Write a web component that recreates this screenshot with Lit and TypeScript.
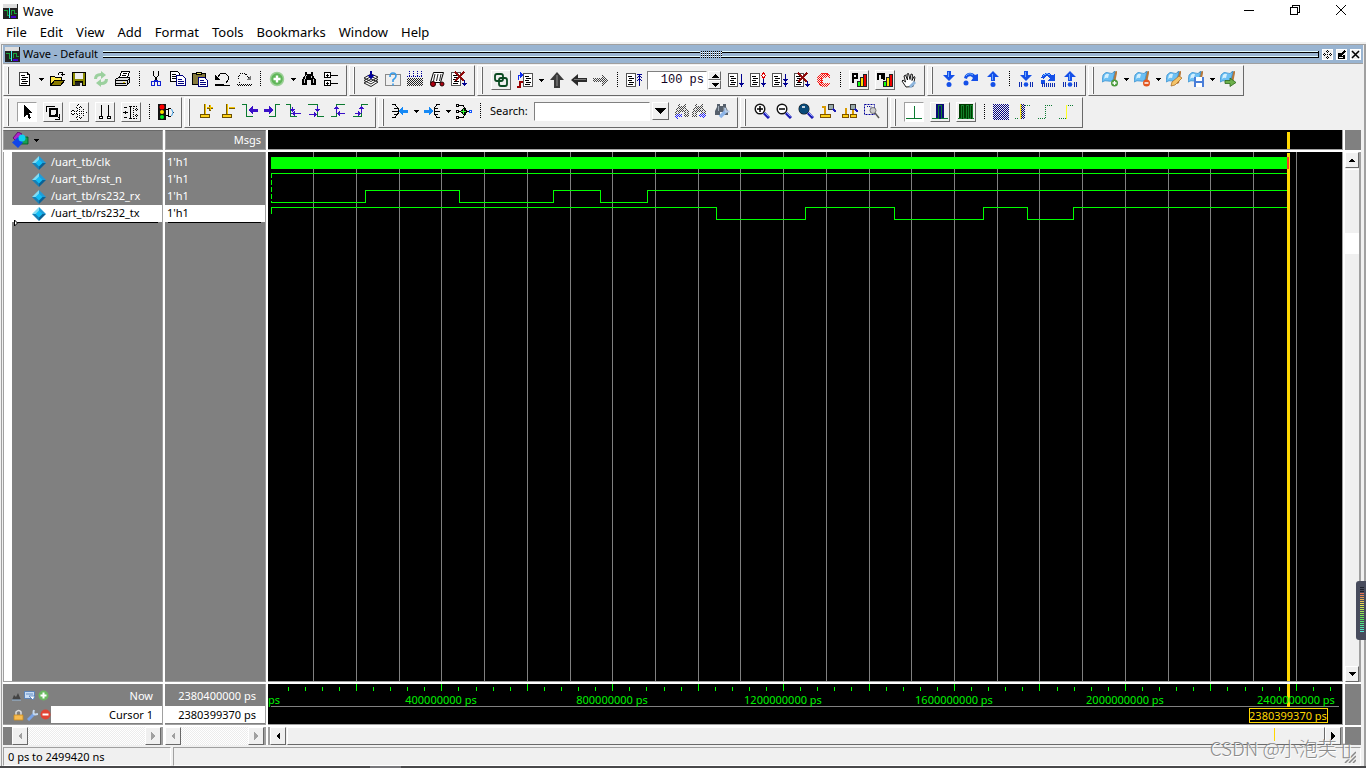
import { LitElement, html, svg, css, nothing } from "lit";
import { customElement } from "lit/decorators.js";
import { classMap } from "lit/directives/class-map.js";

type Item = {
  icon?: string;
  label?: string;
  kind?: "icon" | "raised" | "pressed" | "drop" | "sep" | "time" | "search" | "narrow";
};

const page = svg`<path d="M2.500 1.500h8l2 2v11h-10z" fill="#fff" stroke="#444"/><path d="M10.500 1v2.500H13M3 14.500h10M12.500 4v11" stroke="#000" fill="none"/><path d="M4 4.500h4M5 6.500h6M4 8.500h5M5 10.500h6M4 12.500h6" stroke="#000"/>`;
const sheet = svg`<path d="M.5 1.500h9v13h-9z" fill="#fff" stroke="#555"/><path d="M2 4.500h4M3 6.500h5M2 8.500h4M3 10.500h5M2 12.500h5" stroke="#000"/>`;
const plusDot = svg`<circle cx="12.500" cy="12" r="3.500" fill="#4a9a3c"/><path d="M10.500 12h4M12.500 10v4" stroke="#fff" stroke-width="1.300"/>`;
const flag = svg`<path d="M11 1l4-1v2l-2 10-2 1z" fill="#b9793a"/><path d="M1 4q3-4 6-2t6-2l-2 9q-2 2-5 1t-6 1z" fill="#6cc0f4" stroke="#3a92d0" stroke-width=".8"/><path d="M3 4q2-2 4-1l-1 4q-2-1-4 1z" fill="#d4effd"/>`;
const bar = svg`<path d="M7 10h3v4H7z" fill="#1f1"/><path d="M10 6h3v8h-3z" fill="#ffe000"/><path d="M13 3h3v11h-3z" fill="#e00"/><path d="M6.500 9.500h3v5h-3zM9.500 5.500h3v9h-3zM12.500 2.500h3v12h-3z" fill="none" stroke="#222"/>`;
const lens = svg`<circle cx="6" cy="6" r="4.800" fill="#fff" stroke="#111" stroke-width="1.400"/><path d="M10 10l5 5" stroke="#1a1ab4" stroke-width="3"/><path d="M10.500 9.500l4 4" stroke="#8fa4ff"/>`;
const binoc = svg`<path d="M4 1h2v2h4V1h2v3l3 5v5h-5v-5H6v5H1V9l3-5z" fill="#000"/><path d="M5.500 4L3.500 9v3M10.500 5v2M12.500 8v4" stroke="#ccc"/>`;
const green = "#0a7a30";
const violet = "#3a10c8";
const blue = "#1550e8";
const stepDown = svg`<path d="M6 0h4v4h4L8 10 2 4h4z" fill="${blue}"/><path d="M7 1h1v5H7z" fill="#6fa8ff"/>`;
const over = svg`<path d="M1 7C2 2 8 0 12 4l3-1v7H8l2-3C8 4 4 5 4 8z" fill="${blue}"/><path d="M3 5q3-4 7-1" stroke="#6fb4ff" fill="none"/>`;
const stepUp = svg`<path d="M8 0l6 6h-4v4H6V6H2z" fill="${blue}"/><path d="M7 3h1v6H7z" fill="#6fa8ff"/>`;
const ticks = svg`<path d="M1.500 11v5M3.500 11v5M12.500 11v5M14.500 11v5" stroke="#0d2cb0"/>`;

const icons: Record<string, unknown> = {
  newDoc: page,
  open: svg`<path d="M1.500 5.500h4l1 1h6v7h-11z" fill="#ffe94a" stroke="#000"/><path d="M1.500 14.500l4-5h10l-4 5z" fill="#8a7a00" stroke="#000"/><path d="M9 3.500l1.500-2h3v3M11.500 3.500h4" fill="none" stroke="#000"/>`,
  save: svg`<path d="M1 1h14v14H1z" fill="#000"/><path d="M2 2h2v12H2zM12 2h2v12h-2z" fill="#8a8a00"/><path d="M4 2h8v6H4z" fill="#eee"/><path d="M3 8h10v2H3z" fill="#8a8a00"/><path d="M4 11h7v4H4z" fill="#222"/><path d="M9 12h2v3H9z" fill="#ddd"/>`,
  reload: svg`<g opacity=".8"><path d="M1 8q0-6 7-6V0l5 4-5 4V5Q4 5 4 8z" fill="#86c98a"/><path d="M15 8q0 6-7 6v2l-5-4 5-4v3q4 0 4-3z" fill="#86c98a"/></g>`,
  print: svg`<path d="M6.500.5h8l-2 6h-8z" fill="#fff" stroke="#000"/><path d="M8 2.500h4M7 4.500h4" stroke="#000"/><path d="M.5 8.500l3-2h11v5l-3 3h-11z" fill="#ddd" stroke="#000"/><path d="M1 9.500h11l3-2M12 10v4M1 12.500h10" stroke="#000"/><path d="M8 11h2v1H8z" fill="#e0c000"/>`,
  cut: svg`<path d="M5.500 0v4l4 6M10.500 0v4l-4 6" fill="none" stroke="#000"/><path d="M3.500 10.500h3v4h-3zM9.500 10.500h3v4h-3z" fill="none" stroke="#1020d0"/><path d="M6 9.500h4" stroke="#1020d0" stroke-width="2"/>`,
  copy: svg`<path d="M.5.5h7l2 2v8h-9z" fill="#fff" stroke="#000"/><path d="M2 3.500h4M2 5.500h5M2 7.500h5" stroke="#000"/><path d="M6.500 4.500h6l3 3v7h-9z" fill="#fff" stroke="#00007f"/><path d="M8 8.500h4M8 10.500h6M8 12.500h6" stroke="#00007f"/>`,
  paste: svg`<path d="M.5 2.500h13v11H.5z" fill="#857a3c" stroke="#000"/><path d="M4.500 1.500h5v2h-5z" fill="#e8e060" stroke="#000"/><path d="M6.500 6.500h6l3 3v6h-9z" fill="#fff" stroke="#00007f"/><path d="M8 9.500h4M8 11.500h6M8 13.500h6" stroke="#00007f"/>`,
  undo: svg`<path d="M3 7l4-5h4l3 3v4l-2 3" fill="none" stroke="#000"/><path d="M1 4v5h5z" fill="#000"/><path d="M1 14h9" stroke="#000" stroke-width="2"/><path d="M10 14.500h6" stroke="#000"/>`,
  redo: svg`<path d="M13 7L9 2.500H5L2.500 5v4L4 11.500" fill="none" stroke="#000" stroke-dasharray="1 1"/><path d="M15 4v5h-5z" fill="#777"/><path d="M1 13.500h15M2 14.500h14" stroke="#000" stroke-dasharray="1 1"/>`,
  add: svg`<circle cx="8" cy="8" r="6.500" fill="#5fb658" stroke="#9bd096" stroke-width="1.500"/><path d="M8 4.500v7M4.500 8h7" stroke="#fff" stroke-width="2.400"/>`,
  find: binoc,
  tree: svg`<path d="M1.500 1.500h6v5h-6zM1.500 9.500h6v5h-6z" fill="#fff" stroke="#000"/><path d="M3 4.500h3M4.500 3v3M3 12.500h3M4.500 11v3M8 4.500h7M8 12.500h7" stroke="#000"/>`,
  compile: svg`<path d="M1 12l7-4 7 3-7 4.500zM1 9.500l7-4 7 3-7 4.500zM1 7l7-4 7 3-7 4.500z" fill="#fff" stroke="#222"/><path d="M8 0v5" stroke="#00009a" stroke-width="2"/><path d="M4.500 4h7L8 8.500z" fill="#00009a"/>`,
  help: svg`<path d="M.5 3.500h15v11H.5z" fill="none" stroke="#222" stroke-dasharray="1 1"/><path d="M5 6q0-4 3-4t3 3q0 2-3 4v2M8 12.500v2" stroke="#3a9ce8" stroke-width="1.600" fill="none"/>`,
  memory: svg`<g mask="url(#dither)"><path d="M0 7h16v8H0z" fill="#222"/></g><path d="M2.500 0v5M6.500 0v5M10.500 0v5M14.500 0v5M0 5.500h16" stroke="#00009a" stroke-dasharray="1 1"/>`,
  truck: svg`<path d="M4.500 1.500h10l-3 10h-10z" fill="#fff" stroke="#000"/><path d="M6 3L4.500 10M9 3l-1.500 7M12 3l-1.500 7" stroke="#222"/><circle cx="4" cy="13" r="2.500" fill="#b00010" stroke="#200"/><circle cx="13" cy="13" r="2" fill="#b00010" stroke="#200"/>`,
  stopDoc: svg`${sheet}<path d="M4 1l9 9M13 1L4 10" stroke="#8e0b0b" stroke-width="2"/><path d="M13.500 9v6" stroke="#000090"/><path d="M11 12h5l-2.500 3z" fill="#000090"/>`,
  sync: svg`<path d="M2 4q0-2 2-2h4q2 0 2 2v3q0 2-2 2H4Q2 9 2 7zM6 8q0-2 2-2h4q2 0 2 2v4q0 2-2 2H8q-2 0-2-2z" fill="none" stroke="#0b4a22" stroke-width="1.800"/>`,
  source: svg`<path d="M1.500 8V3H4" fill="none" stroke="#0d2cf0"/><path d="M3 0l4 3-4 3z" fill="#0d2cf0"/><path d="M0 15h3V10h3" fill="none" stroke="#900" stroke-width="2"/><path d="M6.500 1.500h9v13h-9z" fill="#fff" stroke="#555"/><path d="M8 4.500h4M9 6.500h5M8 8.500h4M9 10.500h5M8 12.500h5" stroke="#000"/>`,
  up: svg`<path d="M8 0l7 8h-4v8H5V8H1z" fill="#3b3b3b"/><path d="M7 3h2v11H7z" fill="#666"/>`,
  left: svg`<path d="M0 8l7-6v4h9v4H7v4z" fill="#2b2b2b"/><path d="M3 7h12v1H3z" fill="#777"/>`,
  right: svg`<g mask="url(#dither)"><path d="M16 8L9 2v4H0v4h9v4z" fill="#444"/></g>`,
  restart: svg`<path d="M.5 1.500h9v13h-9z" fill="#fff" stroke="#555"/><path d="M2 4.500h4M3 6.500h5M2 8.500h4M3 10.500h5M2 12.500h5" stroke="#000"/><path d="M13.500 2v12M11 2.500h5M11 8.500h1M15 8.500h1M12 7.500h3M11 5.500h1M15 5.500h1M12 4.500h3" fill="none" stroke="#000090"/>`,
  run: svg`${sheet}<path d="M13.500 2v10" stroke="#000090"/><path d="M11 11h5l-2.500 4z" fill="#000090"/>`,
  cont: svg`${sheet}<path d="M13.500 5v7" stroke="#000090"/><path d="M11 11h5l-2.500 4z" fill="#000090"/><path d="M13.500 1l2 2.500-2 2.500-2-2.500z" fill="#fff" stroke="#d00"/>`,
  runAll: svg`${sheet}<path d="M13.500 2v10" stroke="#000090"/><path d="M11 11h5l-2.500 4zM11 7h5l-2.500 3z" fill="#000090"/>`,
  breakAll: svg`<g mask="url(#dither)"><path d="M5 1h6l3 3v2l-4-1-3 1v5l3 1 4-2v2l-3 3H5l-4-4V5z" fill="#f00"/></g><path d="M13.500 4.500L10.500 1.500h-5L1.500 5.500v5l4 4h5l3-3M10 5.500H7L5.500 7v3L7 11.500h3" stroke="#f13a2e" fill="none" stroke-dasharray="1 1"/>`,
  perfP: svg`<path d="M2 11V2h4v4H3" stroke="#000" stroke-width="2" fill="none"/>${bar}`,
  perfM: svg`<path d="M1 8V2h6v6M4.500 2v5" stroke="#000" stroke-width="2" fill="none"/>${bar}`,
  hand: svg`<path d="M5 15L1 9l1-1 2.500 2L3 4l1.500-1L6.500 8 6 2l1.500-.5L9 7.500 10 2l1.500.5-.5 6L13 4.500l1 .7-2 9.300z" fill="#fff" stroke="#000" stroke-width=".9"/><path d="M9 15l5-5" stroke="#8fb6dd" stroke-width="3"/>`,
  into: svg`${stepDown}<circle cx="8" cy="13.500" r="2.500" fill="${blue}"/>`,
  over: svg`${over}<circle cx="3" cy="12" r="2.500" fill="${blue}"/>`,
  out: svg`${stepUp}<circle cx="8" cy="13.500" r="2.500" fill="${blue}"/>`,
  intoAll: svg`${stepDown}<circle cx="8" cy="13.500" r="2.300" fill="${blue}"/>${ticks}`,
  overAll: svg`${over}<circle cx="3" cy="11" r="2.200" fill="${blue}"/><path d="M2 14h14" stroke="#0d2cb0" stroke-width="4" stroke-dasharray="1 1"/>`,
  outAll: svg`${stepUp}<circle cx="8" cy="13.500" r="2.300" fill="${blue}"/>${ticks}`,
  flagAdd: svg`${flag}${plusDot}`,
  flagDel: svg`${flag}<circle cx="12.500" cy="12" r="3.500" fill="#e2561e"/><path d="M10.500 12h4" stroke="#fff" stroke-width="1.500"/>`,
  flagEdit: svg`${flag}<path d="M5 15l1-4 7-6 3 2-7 7z" fill="#f5c469" stroke="#a9712c" stroke-width=".8"/>`,
  flagSave: svg`${flag}<path d="M6 6h10v10H6z" fill="#4a7ed8"/><path d="M8 6h6v4H8zM8 12h6v4H8z" fill="#fff"/>`,
  flagGo: svg`${flag}<path d="M5 9.500h5V7l6 4.500-6 4v-3H5z" fill="#6db04c" stroke="#2d6a1c" stroke-width=".8"/>`,
  select: svg`<path d="M5 1v12l3-3 2 5 2-1-2-5h4z" fill="#000"/>`,
  zoomSel: svg`<path d="M1.500 8V2.500H10" fill="none" stroke="#000"/><path d="M5 5h7v7H5z" fill="none" stroke="#000" stroke-width="2"/><path d="M10 10.500l4.500 4M14.500 10v5H10" fill="none" stroke="#000" stroke-width="1"/>`,
  pan: svg`<path d="M7.500.5l3 3h-2v4h4v-2l3 3-3 3v-2h-4v4h2l-3 3-3-3h2v-4h-4v2l-3-3 3-3v2h4v-4h-2z" fill="#fff" stroke="#000" stroke-dasharray="1 1"/>`,
  twoBars: svg`<path d="M4.500 1v11M11.500 1v11" stroke="#000"/><path d="M2.500 12.500h3v2h-3zM10.500 12.500h3v2h-3z" fill="#fff" stroke="#000"/>`,
  edit: svg`<path d="M1 3.500h3M1 13.500h3M0 8.500h5M2.500 7v3M5.500 2.500h2v12h-2" fill="none" stroke="#000"/><path d="M10.500 2v13M8 14.500h3M8 2.500h2" stroke="#000" stroke-dasharray="1 1"/><path d="M10.500 2.500h3M10.500 14.500h3M12 5.500h4M12 11.500h4M13.500 4v3M13.500 10v3" stroke="#000" stroke-dasharray="1 1"/>`,
  light: svg`<path d="M0 0h8v16H0z" fill="#111"/><circle cx="4" cy="3" r="2.500" fill="#f00"/><circle cx="4" cy="8" r="2" fill="#fd0"/><circle cx="4" cy="13" r="2" fill="#0e2"/><path d="M8 5.500h2.500M8 11.500h2.500M10.500 4v9M11 4.500h2M11 12.500h2M15 8.500h1" fill="none" stroke="#000"/><path d="M13.500 5l1.500 3.500-1.500 3.500" stroke="#3b9ae0" fill="none"/>`,
  addCursor: svg`<path d="M7 1v10M9 5h6M12 2v6" stroke="#7a5d00" stroke-width="2"/><path d="M7.500 1v10M9 4.500h6M12.500 2v5" stroke="#f2c200"/><path d="M2.500 11.500h9v3h-9z" fill="#ffd21a" stroke="#6b5000"/>`,
  delCursor: svg`<path d="M7 1v10M9 5h6" stroke="#7a5d00" stroke-width="2"/><path d="M7.500 1v10M9 4.500h6" stroke="#f2c200"/><path d="M2.500 11.500h9v3h-9z" fill="#ffd21a" stroke="#6b5000"/>`,
  prevEdge: svg`<path d="M0 1.500h4.500v12H11" fill="none" stroke="${green}"/><path d="M6 7l5-4v2.500h5v3h-5V11z" fill="${violet}"/>`,
  nextEdge: svg`<path d="M16 1.500h-4.500v12H5" fill="none" stroke="${green}"/><path d="M10 7L5 3v2.500H0v3h5V11z" fill="${violet}"/>`,
  prevFall: svg`<path d="M0 1.500h4.500v12H11" fill="none" stroke="${green}"/><path d="M5 10.500h10M6.500 4v4M8.500 8v5M4 6.500h5" fill="none" stroke="${violet}"/><path d="M4 6h5L6.500 9zM6 10.500L9 8v5z" fill="${violet}"/>`,
  nextFall: svg`<path d="M0 1.500h9.500v12H16" fill="none" stroke="${green}"/><path d="M1 11.500h6M9.500 3v4" fill="none" stroke="${violet}"/><path d="M7 6h5L9.500 9zM9 11.500L6 9v5z" fill="${violet}"/>`,
  prevRise: svg`<path d="M1 13.500h5.500v-12H15" fill="none" stroke="${green}"/><path d="M9 10.500h6M6.500 6v4" fill="none" stroke="${violet}"/><path d="M4 6h5L6.500 3zM7 10.500L10 8v5z" fill="${violet}"/>`,
  nextRise: svg`<path d="M1 13.500h8.500v-12H16" fill="none" stroke="${green}"/><path d="M3 10.500h5M9.500 6v4" fill="none" stroke="${violet}"/><path d="M7 6h5L9.500 3zM9 10.500L6 8v5z" fill="${violet}"/>`,
  merge: svg`<path d="M0 1.500h3l3 4v5l-3 4H0M0 8.500h6M2 5.500h3M2 11.500h3" fill="none" stroke="#000"/><path d="M6 8l5-4v2.500h5v3h-5V12z" fill="#1689f5"/>`,
  split: svg`<path d="M16 1.500h-3l-3 4v5l3 4h3M10 8.500h6M11 5.500h3M11 11.500h3" fill="none" stroke="#000"/><path d="M10 8L5 4v2.500H0v3h5V12z" fill="#1689f5"/>`,
  expand: svg`<path d="M2 2.500h5l3 4M2 8.500h3M2 14.500h5l3-4" fill="none" stroke="#000"/><path d="M.5 1.500h2v2h-2zM.5 7.500h2v2h-2zM.5 13.500h2v2h-2z" fill="#fff" stroke="#000"/><path d="M8 4l4 4.500L8 13 4 8.500z" fill="#000"/><path d="M7.500 6v5M5 8.500h5" stroke="#3f3"/><path d="M11 8.500h2" stroke="#000"/><path d="M13.500 7.500h2v2h-2z" fill="#fff" stroke="#15f"/>`,
  findPrev: svg`<g mask="url(#dither)"><g opacity=".7">${binoc}</g><path d="M0 13l4-4v2h4v3H4v2z" fill="#22f"/></g>`,
  findNext: svg`<g mask="url(#dither)"><g opacity=".7">${binoc}</g><path d="M16 13l-4-4v2H8v3h4v2z" fill="#22f"/></g>`,
  findOpt: svg`<path d="M3 1h3v2h3V1h3v3l2 4v4h-4V9H6v3H1V8l2-4z" fill="#56606c"/><path d="M4.500 3v5M10 4v4" stroke="#a0acb8"/><path d="M6 14l6-6" stroke="#8cb4e8" stroke-width="3.500"/><path d="M11 5l1 3.500h3.500" stroke="#b8cce6" stroke-width="2" fill="none"/>`,
  zoomIn: svg`${lens}<path d="M3 6h6M6 3v6" stroke="#000" stroke-width="1.500"/>`,
  zoomOut: svg`${lens}<path d="M3 6h6" stroke="#000" stroke-width="1.500"/>`,
  zoomFull: svg`${lens}<circle cx="6" cy="6" r="5" fill="#0a4a78"/><path d="M4 4h3" stroke="#fff" stroke-width="1.500"/>`,
  zoomCursor: svg`<path d="M4.500 3v9M2 3.500h4" stroke="#d89a00" stroke-width="2"/><path d="M.5 11.500h10v3H.5z" fill="#ffd21a" stroke="#7a5200"/><circle cx="11" cy="4" r="3" fill="#9aa" stroke="#333"/><path d="M13 6l3 3" stroke="#1a1ab4" stroke-width="2"/>`,
  zoomTwo: svg`<path d="M3.500 5v7M10.500 6v6" stroke="#d89a00" stroke-width="2"/><path d="M.5 11.500h6v3h-6zM8.500 11.500h6v3h-6z" fill="#ffd21a" stroke="#7a5200"/><circle cx="11" cy="4" r="3" fill="#9aa" stroke="#333"/><path d="M13 6l3 3" stroke="#1a1ab4" stroke-width="2"/>`,
  zoomRange: svg`<path d="M.5 1.500h10v10H.5z" fill="none" stroke="#00009a" stroke-dasharray="2 1"/><path d="M3 3.500h4v5" fill="none" stroke="#00009a" stroke-dasharray="1 1"/><circle cx="9" cy="7.500" r="3" fill="#ccc" stroke="#777"/><path d="M11 10l4 5" stroke="#555" stroke-width="1.500"/>`,
  waveA: svg`<path d="M0 14.500h16M8.500 2v12" stroke="${green}"/>`,
  waveB: svg`<path d="M4 0h8v15H4z" fill="#0b0b78"/><path d="M0 14.500h6v-13h3v13h7" fill="none" stroke="${green}"/>`,
  waveC: svg`<path d="M1 0h14v15H1z" fill="#003c00"/><path d="M0 14.500h3v-13h2v13h3v-13h2v13h2v-13h2v13h2" fill="none" stroke="#12802a"/>`,
  hatch: svg`<g mask="url(#dither)"><path d="M0 0h16v16H0z" fill="#00007f"/></g>`,
  edgeA: svg`<path d="M5 0h2v15H5z" fill="#fe3"/><g mask="url(#dither)"><path d="M6 0h4v15H6z" fill="#000070"/></g><path d="M0 14.500h4M10 1.500h5" stroke="${green}" stroke-dasharray="1 1"/>`,
  edgeB: svg`<path d="M1 14.500h7.500v-13H15" fill="none" stroke="${green}" stroke-dasharray="1 1"/>`,
  edgeC: svg`<path d="M0 14.500h7v-13h8" fill="none" stroke="${green}" stroke-dasharray="1 1"/><path d="M7.500 1v14" stroke="#ff2"/>`,
};

/* Icons made of curves and shading; the others keep hard pixel edges. */
const smooth = new Set(["reload", "add", "help", "truck", "compile", "sync", "up", "left", "hand", "into", "over", "out", "intoAll", "outAll", "flagAdd", "flagDel", "flagEdit", "flagSave", "flagGo", "findOpt", "zoomIn", "zoomOut", "zoomFull", "zoomRange", "light"]);

const i = (icon: string, label: string): Item => ({ icon, label, kind: "icon" });
const r = (icon: string, label: string): Item => ({ icon, label, kind: "raised" });
const sep: Item = { kind: "sep" };
const drop: Item = { kind: "drop" };

const rowOne: { low?: boolean; items: Item[] }[] = [
  { items: [i("newDoc", "New"), drop, i("open", "Open"), i("save", "Save"), i("reload", "Reload"), i("print", "Print"), sep, i("cut", "Cut"), i("copy", "Copy"), i("paste", "Paste"), i("undo", "Undo"), i("redo", "Redo"), sep, i("add", "Add"), drop, i("find", "Find"), i("tree", "Collapse all")] },
  { items: [i("compile", "Compile"), i("help", "Help"), i("memory", "Memory"), i("truck", "Simulate"), i("stopDoc", "End simulation")] },
  { low: true, items: [r("sync", "Link"), i("source", "Source"), drop, i("up", "Up"), i("left", "Back"), i("right", "Forward"), sep, i("restart", "Restart"), { kind: "time" }, i("run", "Run"), i("cont", "Continue"), i("runAll", "Run all"), i("stopDoc", "Break"), i("breakAll", "Stop"), sep, r("perfP", "Performance profile"), r("perfM", "Memory profile"), i("hand", "Edit breakpoints")] },
  { items: [i("into", "Step into"), i("over", "Step over"), i("out", "Step out"), sep, i("intoAll", "Step into current"), i("overAll", "Step over current"), i("outAll", "Step out current")] },
  { items: [i("flagAdd", "Add bookmark"), drop, i("flagDel", "Delete bookmark"), drop, i("flagEdit", "Manage bookmarks"), i("flagSave", "Save bookmarks"), drop, i("flagGo", "Go to bookmark")] },
];

const rowTwo: { low?: boolean; items: Item[] }[] = [
  { low: true, items: [{ icon: "select", label: "Select mode", kind: "pressed" }, r("zoomSel", "Zoom mode"), r("pan", "Pan mode"), r("twoBars", "Two cursor mode"), r("edit", "Edit mode"), sep, i("light", "Stop drawing")] },
  { items: [i("addCursor", "Insert cursor"), i("delCursor", "Delete cursor"), i("prevEdge", "Previous transition"), i("nextEdge", "Next transition"), i("prevFall", "Previous falling edge"), i("nextFall", "Next falling edge"), i("prevRise", "Previous rising edge"), i("nextRise", "Next rising edge")] },
  { items: [i("merge", "Drivers"), drop, i("split", "Readers"), drop, i("expand", "Expand"), sep, { kind: "search" }, { icon: "findPrev", label: "Search backward", kind: "narrow" }, { icon: "findNext", label: "Search forward", kind: "narrow" }, i("findOpt", "Search options")] },
  { items: [i("zoomIn", "Zoom in"), i("zoomOut", "Zoom out"), i("zoomFull", "Zoom full"), i("zoomCursor", "Zoom on cursor"), i("zoomTwo", "Zoom between cursors"), i("zoomRange", "Zoom other window")] },
  { low: true, items: [{ icon: "waveA", label: "Show drivers", kind: "pressed" }, r("waveB", "Pulse"), r("waveC", "Clock"), sep, i("hatch", "Unknown"), i("edgeA", "Edge delay"), i("edgeB", "Edge"), i("edgeC", "Edge mark")] },
];

const menus = ["File", "Edit", "View", "Add", "Format", "Tools", "Bookmarks", "Window", "Help"];
const signals = ["/uart_tb/clk", "/uart_tb/rst_n", "/uart_tb/rs232_rx", "/uart_tb/rs232_tx"];

const END = 2380400000;
const ORIGIN = 3;
const timeX = (ps: number) => Math.floor(ORIGIN + (ps * 170.88) / 4e8);
/* Transition times in pixels from the start of the trace. */
const rxEdges = [94, 188, 282, 329, 376];
const txEdges = [445, 534, 623, 712, 756, 802];

const trace = (edges: number[], high: number, low: number, startHigh: boolean) => {
  let level = startHigh;
  let d = `M${ORIGIN}.5 ${level ? high : low}.5`;
  for (const e of edges) {
    level = !level;
    d += `H${ORIGIN + e}.5V${level ? high : low}.5`;
  }
  return d + `H${timeX(END)}`;
};

@customElement("app-root")
export class AppRoot extends LitElement {
  static styles = css`
    :host { display: block; height: 100vh; font: 11px/14px "Noto Sans", sans-serif; color: #000; }
    * { box-sizing: border-box; }
    button { padding: 0; border: 0; background: none; font: inherit; color: inherit; display: flex; align-items: center; justify-content: center; }
    svg { display: block; flex: none; }
    .crisp { shape-rendering: crispEdges; }
    .defs { position: absolute; width: 0; height: 0; }
    .app { height: 100%; display: flex; flex-direction: column; background: #fff; overflow: hidden; }
    .title { height: 23px; flex: none; display: flex; align-items: center; padding: 0 2px 0 3px; font-size: 12px; }
    .title span { flex: 1; margin-left: 5px; }
    .title button { width: 46px; height: 20px; align-self: flex-start; }
    .menu { height: 19px; flex: none; display: flex; align-items: flex-start; gap: 13px; padding-left: 6px; font-size: 13px; }
    .menu button { height: 18px; }
    .pane { flex: 1; min-height: 0; display: flex; flex-direction: column; background: #f0f0f0; padding: 1px 3px 0 3px; box-shadow: inset 1px 2px #f0f0f0, inset 2px 3px #a0a0a0, inset -2px 0 #a0a0a0; }
    .caption { height: 18px; margin-top: 2px; flex: none; display: flex; align-items: center; background: #99b4d1; padding: 0 2px 0 2px; }
    .caption span { margin: 0 5px 0 3px; }
    .rails { flex: 1; height: 7px; display: flex; align-items: stretch; justify-content: center; border-right: 1px solid #000; background: linear-gradient(#e0fbff 1px, #000 1px 2px, #99b4d1 2px 5px, #e0fbff 5px 6px, #000 6px); }
    .grab { width: 22px; background: conic-gradient(#000 25%, #fff 0 50%, #99b4d1 0) 0 0 / 2px 2px; }
    .mini { width: 11px; height: 11px; margin-left: 3px; background: #f0f0f0; border: 1px solid #fff; }
    .bars { flex: none; padding: 1px 0; border-top: 1px solid #a0a0a0; }
    .barrow { display: flex; gap: 2px; margin-bottom: 1px; }
    .bar { height: 31px; display: flex; align-items: center; padding: 0 4px 3px 3px; border: 1px solid; border-color: #fff #696969 #696969 #fff; }
    .bar.low { padding-bottom: 1px; }
    .handle { width: 2px; align-self: stretch; margin: 1px 5px 0 0; background: linear-gradient(90deg, #fff 1px, #696969 1px); }
    .bar:not(.low) .handle { margin-bottom: -2px; }
    .tool { width: 22px; height: 20px; }
    .narrow { width: 17px; height: 20px; }
    .narrow + .tool { margin-left: 3px; }
    .raised, .pressed { width: 20px; height: 20px; margin: 0 3px; border: 1px solid; border-color: #fff #696969 #696969 #fff; }
    .pressed { background: #fff; border-color: #a0a0a0 #fff #fff #a0a0a0; }
    .drop { width: 10px; height: 16px; }
    .sep { width: 11px; height: 16px; background: repeating-linear-gradient(#000 0 1px, transparent 1px 2px) center / 1px 100% no-repeat; }
    .time { width: 60px; height: 19px; margin-left: 2px; padding: 0 2px; border: 1px solid; border-color: #808080 #fff #fff #808080; text-align: right; font: 12px "Liberation Mono", monospace; color: #102; }
    .spin { display: flex; flex-direction: column; margin: 0 4px 0 1px; }
    .spin button { width: 13px; height: 9px; border: 1px solid; border-color: #fff #696969 #696969 #fff; }
    .search { display: contents; }
    .search label { margin: 0 6px 0 4px; }
    .search input { width: 116px; height: 19px; border: 1px solid; border-color: #808080 #fff #fff #808080; background: #fff; }
    .search button { width: 17px; height: 18px; margin: 0 5px 0 2px; border: 1px solid; border-color: #fff #696969 #696969 #fff; }
    .grid { flex: 1; min-height: 0; display: grid; grid-template-columns: 160px 101px minmax(0, 1fr) 16px; grid-template-rows: 20px minmax(0, 1fr) 41px 18px; gap: 2px; background: #fff; margin-right: 2px; }
    .cell { background: #808080; border-right: 1px solid #a0a0a0; border-bottom: 1px solid #a0a0a0; min-width: 0; overflow: hidden; }
    .head { border-top: 1px solid #696969; border-left: 1px solid #a0a0a0; color: #fff; display: flex; align-items: center; gap: 3px; padding: 0 4px 0 8px; }
    .msgs { justify-content: flex-end; }
    .plot { background: #000; }
    .names { border-left: 1px solid #a0a0a0; }
    .gutter { border-left: 8px solid #fff; height: 100%; padding-top: 2px; position: relative; }
    .values { padding-top: 2px; }
    ul { list-style: none; margin: 0; padding: 0; }
    li { height: 17px; line-height: 15px; display: flex; align-items: flex-start; color: #fff; white-space: nowrap; }
    .names li { padding-left: 20px; gap: 5px; }
    li svg { margin-top: 2px; }
    .values li { padding-left: 2px; }
    li.sel { background: #fff; color: #000; }
    .line { height: 1px; margin: 0 4px 0 3px; background: #000; }
    .insert { position: absolute; left: 1px; top: 67px; }
    .foot { padding-top: 1px; display: grid; grid-template-rows: 21px 17px; align-items: center; }
    .foot div { height: 100%; display: flex; align-items: center; justify-content: flex-end; padding-right: 9px; color: #fff; white-space: nowrap; }
    .foot .cur { background: #fff; color: #000; }
    .foot .icons { justify-content: flex-start; padding: 0 0 0 9px; gap: 2px; }
    .foot .icons.cur { background: linear-gradient(90deg, #808080 48px, #fff 48px); }
    .icons span { flex: 1; text-align: right; padding-right: 9px; }
    .hbar { display: flex; background: #f0f0f0; }
    .hbar.first { border-left: 9px solid #808080; }
    .hbar button, .vbar button { width: 16px; height: 100%; flex: none; background: #f0f0f0; border: 1px solid; border-color: #fff #696969 #696969 #fff; }
    .hbar:not(.wide) { border-right: 2px solid #a0a0a0; }
    .track { flex: 1; background: conic-gradient(#fff 25%, #ececec 0 50%, #fff 0 75%, #ececec 0) 0 0 / 2px 2px; }
    .wide { border-left: 2px solid #a0a0a0; border-right: 2px solid #a0a0a0; }
    .thumb { flex: 1; display: flex; min-width: 0; background: #f0f0f0; border: 1px solid; border-color: #fff #696969 #696969 #fff; margin-left: 1px; }
    .vbar { display: flex; flex-direction: column; background: #f0f0f0; border-right: 2px solid #a0a0a0; }
    .vbar button { width: 100%; height: 16px; }
    .vthumb { height: 64px; border-top: 1px solid #fff; margin-top: 1px; }
    .vgap { height: 21px; background: #fff; }
    .vrest { flex: 1; }
    .side { background: #808080; }
    .status { height: 19px; flex: none; display: flex; gap: 2px; margin: 2px 2px 0 0; }
    .status div { border: 1px solid; border-color: #a0a0a0 #fff #fff #a0a0a0; padding: 2px 4px; }
    .range { width: 168px; }
    .rest { flex: 1; display: flex; justify-content: flex-end; align-items: flex-end; }
    .edge { height: 2px; flex: none; background: linear-gradient(90deg, #48484a 370px, #77777a 370px 401px, #48484a 401px); }
    .axis { fill: #00f000; text-anchor: middle; }
    .gold { fill: #ffd700; text-anchor: middle; }
    .meter { position: absolute; right: 0; top: 581px; width: 10px; height: 59px; border-radius: 3px 0 0 3px; background: #474b5c; padding: 6px 2px 6px 4px; }
    .mark-text { position: absolute; right: 15px; bottom: 8px; font: 300 19px/24px "Noto Sans CJK SC", sans-serif; color: #8a8a8a; text-shadow: 1px 1px #fff; pointer-events: none; white-space: nowrap; }
  `;

  private glyph(name: string) {
    return html`<svg class=${smooth.has(name) ? "" : "crisp"} width="16" height="16" viewBox="0 0 16 16" fill="none">${icons[name]}</svg>`;
  }

  private arrow(d: string, color = "#000") {
    return html`<svg class="crisp" width="8" height="8" viewBox="0 0 8 8"><path d=${d} fill=${color} /></svg>`;
  }

  private waveIcon() {
    return html`<svg class="crisp" width="15" height="15" viewBox="0 0 15 15"><path d="M0 0h15v15H0z" fill="#222" /><path d="M0 0h14v4H0z" fill="#ddd" /><path d="M1 6.500h3v5h2M8 10.500v-4h3v3h3" fill="none" stroke="#19a33c" /><path d="M6.500 4v10" stroke="#4ee" /><path d="M8 12.500h5" stroke="#40c" stroke-width="2" /></svg>`;
  }

  private item(it: Item) {
    switch (it.kind) {
      case "sep":
        return html`<span class="sep"></span>`;
      case "drop":
        return html`<button class="drop" aria-label="More">${this.arrow("M1 3h6L4 6z")}</button>`;
      case "time":
        return html`<input class="time" aria-label="Run length" value="100 ps" />
          <span class="spin"><button aria-label="Increase">${this.arrow("M0 6h8L4 2z")}</button><button aria-label="Decrease">${this.arrow("M0 2h8L4 6z")}</button></span>`;
      case "search":
        return html`<span class="search"><label for="search">Search:</label><input id="search" /><button aria-label="Search history">
          <svg class="crisp" width="12" height="8" viewBox="0 0 12 8"><path d="M0 1h12L6 7z" /></svg></button></span>`;
      default: {
        const cls = { tool: it.kind === "icon", narrow: it.kind === "narrow", raised: it.kind === "raised", pressed: it.kind === "pressed" };
        return html`<button class=${classMap(cls)} title=${it.label ?? nothing} aria-label=${it.label ?? nothing}>${this.glyph(it.icon!)}</button>`;
      }
    }
  }

  private bars(rows: { low?: boolean; items: Item[] }[]) {
    return html`<div class="barrow">${rows.map((b) => html`<div class=${classMap({ bar: true, low: !!b.low })}><span class="handle"></span>${b.items.map((it) => this.item(it))}</div>`)}</div>`;
  }

  private gem() {
    return html`<svg width="14" height="14" viewBox="0 0 14 14"><path d="M7 0v7H0z" fill="#7fdcf5" /><path d="M7 0l7 7H7z" fill="#1f9cd8" /><path d="M0 7h7v7z" fill="#1580b8" /><path d="M14 7l-7 7V7z" fill="#0b6296" /><path d="M7 3.500L10.500 7 7 10.500 3.500 7z" fill="#12bdf5" /></svg>`;
  }

  private plot() {
    const grid = Array.from({ length: 24 }, (_, k) => timeX((k + 1) * 1e8) + 0.5);
    const end = timeX(END);
    return html`<svg class="crisp" width="100%" height="100%" role="img" aria-label="Waveforms">
      ${grid.map((x) => svg`<path d="M${x} 0V2000" stroke="#808080" />`)}
      <path d="M${ORIGIN} 5H${end}V17H${ORIGIN}z" fill="#0f0" />
      <g fill="none" stroke="#0f0">
        <path d="M3.500 21V51" stroke-dasharray="5 2" />
        <path d="M3.500 55v7" />
        <path d="M3 21.500H${end}" />
        <path d=${trace(rxEdges, 38, 50, false)} />
        <path d=${trace(txEdges, 55, 67, true)} />
      </g>
      <path d="M${end} 1h3V2000h-3z" fill="#ffd700" />
      <path d="M${end} 5h2v12h-2z" fill="#ff3b1f" />
    </svg>`;
  }

  private timeline() {
    const marks = Array.from({ length: 62 }, (_, k) => k + 1);
    const labels = [4e8, 8e8, 12e8, 16e8, 20e8, 24e8];
    const end = timeX(END);
    return html`<svg class="crisp" width="100%" height="40" role="img" aria-label="Timeline">
      ${marks.map((k) => svg`<path d="M${timeX(k * 4e7) + 0.5} ${k % 5 ? 3 : 0}V7" stroke="#0f0" />`)}
      <path d="M3 22.500H1071" stroke="#808080" />
      <text class="axis" x="6" y="20">ps</text>
      <path d="M${end} 0h3V23h-3z" fill="#ffd700" />
      ${labels.map((t) => svg`<text class="axis" x=${timeX(t)} y="20">${t} ps</text>`)}
      <path d="M${end - 37.5} 24.500h78v14h-78z" fill="#000" stroke="#ffd700" />
      <text class="gold" x=${end + 1} y="36">2380399370 ps</text>
    </svg>`;
  }

  private meterColor(k: number) {
    if (k < 3) return "#1d202b";
    const hue = 12 + ((k - 3) / 19) * 160;
    return `hsl(${Math.round(hue)} 75% 62%)`;
  }

  render() {
    const grey = "#a0a0a0";
    const leftArrow = "M6 0v8L2 4z";
    const rightArrow = "M2 0v8l4-4z";
    return html`
      <svg class="defs"><defs>
        <pattern id="dots" width="2" height="2" patternUnits="userSpaceOnUse"><path d="M0 0h1v1H0zM1 1h1v1H1z" fill="#fff" /></pattern>
        <mask id="dither" maskUnits="userSpaceOnUse" x="0" y="0" width="16" height="16"><rect width="16" height="16" fill="url(#dots)" shape-rendering="crispEdges" /></mask>
      </defs></svg>
      <div class="app">
        <header class="title">${this.waveIcon()}<span>Wave</span>
          <button aria-label="Minimize"><svg class="crisp" width="10" height="10"><path d="M0 5.500h10" stroke="#000" /></svg></button>
          <button aria-label="Restore"><svg class="crisp" width="10" height="10" fill="none" stroke="#000"><path d="M.5 2.500h7v7h-7zM2.500 2V.5h7v7H8" /></svg></button>
          <button aria-label="Close"><svg width="10" height="10"><path d="M0 0l10 10M10 0L0 10" stroke="#000" /></svg></button>
        </header>
        <nav class="menu">${menus.map((m) => html`<button>${m}</button>`)}</nav>
        <main class="pane">
          <div class="caption">${this.waveIcon()}<span>Wave - Default</span><div class="rails"><div class="grab"></div></div>
            <button class="mini" aria-label="Move"><svg class="crisp" width="9" height="9" fill="none" stroke="#000"><path d="M4.500 0v9M0 4.500h9M3 1.500h3M3 7.500h3M1.500 3v3M7.500 3v3" stroke-dasharray="1 1" /></svg></button>
            <button class="mini" aria-label="Dock"><svg class="crisp" width="9" height="9" fill="none" stroke="#000"><path d="M1.500 3v5.500H7V5M8 1L3.500 5.500M3 3v3.500h4" stroke-width="1.500" /></svg></button>
            <button class="mini" aria-label="Close pane"><svg width="9" height="9"><path d="M1 1l7 7M8 1L1 8" stroke="#000" stroke-width="1.600" /></svg></button>
          </div>
          <div class="bars">${this.bars(rowOne)}${this.bars(rowTwo)}</div>
          <div class="grid">
            <div class="cell head"><svg width="17" height="16" viewBox="0 0 17 16"><path d="M6 0l4 2-6 7-3-3z" fill="#b026c8" stroke="#506" stroke-width=".8" /><path d="M9 5h7v7H9z" fill="#1aa050" stroke="#052" stroke-width=".8" /><path d="M6 5l5 5.500L6 16 0 10.500z" fill="#0f46e8" /><circle cx="10" cy="6" r="3.500" fill="#10d0f0" /></svg>${this.arrow("M1 3h6L4 6z")}</div>
            <div class="cell head msgs">Msgs</div>
            <div class="cell plot"><svg class="crisp" width="100%" height="20"><path d="M${timeX(END)} 2h3v17h-3z" fill="#ffd700" /></svg></div>
            <div class="side"></div>

            <div class="cell names"><div class="gutter">
              <ul>${signals.map((s, n) => html`<li class=${classMap({ sel: n === 3 })}>${this.gem()}<span>${s}</span></li>`)}</ul>
              <div class="line"></div>
              <svg class="insert" width="5" height="8"><path d="M1.500 1l3 3-3 3z" fill="#fff" stroke="#000" /></svg>
            </div></div>
            <div class="cell values"><ul>${signals.map((_, n) => html`<li class=${classMap({ sel: n === 3 })}>1'h1</li>`)}</ul><div class="line"></div></div>
            <div class="cell plot">${this.plot()}</div>
            <div class="vbar"><button aria-label="Scroll up">${this.arrow("M1 6h6L4 2z")}</button><div class="vthumb"></div><div class="vgap"></div><div class="vrest"></div><button aria-label="Scroll down">${this.arrow("M0 2h8L4 6z")}</button></div>

            <div class="cell foot">
              <div class="icons">
                <svg width="10" height="10"><path d="M0 9l2-5 2 2 2-4 3 7z" fill="#444" /><path d="M0 9h9" stroke="#9bd" /></svg>
                <svg width="12" height="11"><path d="M.5 1.500h10v7H.5z" fill="#c8dcf4" stroke="#4a78b8" stroke-width=".8" /><path d="M2 4h7M5 6h6l-2 4z" stroke="#4a78b8" stroke-width=".8" fill="#fff" /></svg>
                <svg width="11" height="11"><circle cx="5.500" cy="5.500" r="5" fill="#6aba60" /><path d="M5.500 2.500v6M2.500 5.500h6" stroke="#fff" stroke-width="2" /></svg>
                <span>Now</span>
              </div>
              <div class="icons cur">
                <svg width="13" height="12"><path d="M4 6V3q3-3 5 0v3" fill="none" stroke="#ddd" stroke-width="1.500" /><path d="M2 6h9v5H2z" fill="#f8bc50" stroke="#c88a20" stroke-width=".8" /></svg>
                <svg width="11" height="12"><path d="M1 11l6-6" stroke="#7aa4e8" stroke-width="3" /><path d="M7 1q-1 3 0 4t4 0" stroke="#c4d8f0" stroke-width="2" fill="none" /></svg>
                <svg width="11" height="11"><circle cx="5.500" cy="5.500" r="5" fill="#e04434" /><path d="M2.500 5.500h6" stroke="#fff" stroke-width="2" /></svg>
                <span>Cursor 1</span>
              </div>
            </div>
            <div class="cell foot"><div>2380400000 ps</div><div class="cur">2380399370 ps</div></div>
            <div class="cell plot">${this.timeline()}</div>
            <div class="side"></div>

            <div class="hbar first"><button aria-label="Left">${this.arrow(leftArrow, grey)}</button><div class="track"></div><button aria-label="Right">${this.arrow(rightArrow, grey)}</button></div>
            <div class="hbar"><button aria-label="Left">${this.arrow(leftArrow, grey)}</button><div class="track"></div><button aria-label="Right">${this.arrow(rightArrow, grey)}</button></div>
            <div class="hbar wide"><button aria-label="Scroll left">${this.arrow(leftArrow)}</button><div class="thumb"><svg class="crisp" width="100%" height="14"><path d="M986.500 0v13" stroke="#ffd700" /></svg></div><button aria-label="Scroll right">${this.arrow(rightArrow)}</button></div>
            <div class="side"></div>
          </div>
          <footer class="status"><div class="range">0 ps to 2499420 ns</div><div class="rest"><svg width="12" height="12"><path d="M1 12L12 1M5 12l7-7M9 12l3-3" stroke="#888" stroke-width="1.500" /></svg></div></footer>
        </main>
        <div class="edge"></div>
      </div>
      <div class="meter"><svg class="crisp" width="4" height="46">${Array.from({ length: 23 }, (_, k) => svg`<path d="M0 ${k * 2 + 0.5}h4" stroke=${this.meterColor(k)} />`)}</svg></div>
      <div class="mark-text">CSDN @小泡芙 ▯</div>
    `;
  }
}
